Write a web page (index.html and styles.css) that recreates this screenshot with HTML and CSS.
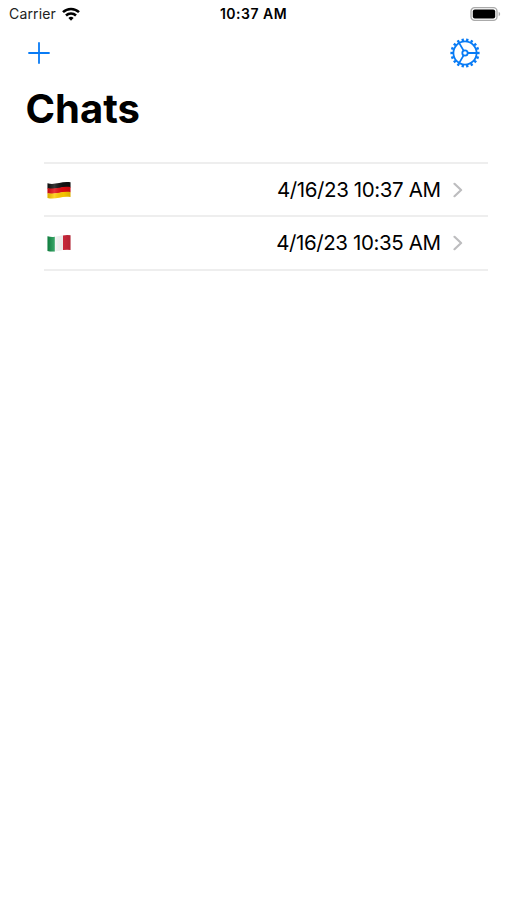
FILE: index.html
```html
<!DOCTYPE html>
<html lang="en">
<head>
<meta charset="utf-8">
<title>Chats</title>
<link rel="stylesheet" href="styles.css">
</head>
<body>
<header class="status">
  <div class="carrier"><span>Carrier</span>
    <svg width="18" height="14" viewBox="0 0 18 14" fill="none" stroke="#000" stroke-width="2.5"><path d="M1 5.2a11.3 11.3 0 0 1 16 0"/><path d="M4 8.5a7.1 7.1 0 0 1 10 0"/><path d="M9 13.8 6.4 11a3.8 3.8 0 0 1 5.2 0Z" fill="#000" stroke="none"/></svg>
  </div>
  <time class="clock">10:37 AM</time>
  <svg class="battery" width="32" height="14" viewBox="0 0 32 14"><rect x="1" y=".7" width="26" height="12.6" rx="3.6" fill="#fff" stroke="#aaa" stroke-width="1.3"/><rect x="2.8" y="2.5" width="22.4" height="9" rx="2" fill="#000"/><path d="M28.7 4.8c2 .8 2 3.6 0 4.4Z" fill="#aaa"/></svg>
</header>
<nav class="toolbar">
  <button class="tool" aria-label="New chat"><svg width="22" height="22" viewBox="0 0 22 22" stroke="#087bf5" stroke-width="1.8" stroke-linecap="round"><path d="M11 1v20M1 11h20"/></svg></button>
  <button class="tool" aria-label="Settings"><svg width="30" height="30" viewBox="0 0 30 30" fill="none" stroke="#087bf5" stroke-width="1.8"><circle cx="15" cy="15" r="11.6"/><circle cx="15" cy="15" r="13.3" stroke-width="2.6" pathLength="36" stroke-dasharray="1 1" stroke-dashoffset=".5"/><circle cx="15" cy="15" r="2.7"/><path d="M17.8 15h9M13.6 12.6 9.1 4.9M13.6 17.4l-4.5 7.7"/></svg></button>
</nav>
<h1 class="title">Chats</h1>
<main class="list">
  <a class="row">
    <svg class="flag" width="24" height="18" viewBox="0 0 24 18" role="img" aria-label="German"><defs><linearGradient id="shade"><stop offset="0" stop-color="#000" stop-opacity=".15"/><stop offset=".3" stop-color="#fff" stop-opacity=".16"/><stop offset=".7" stop-color="#000" stop-opacity=".04"/><stop offset="1" stop-color="#000" stop-opacity=".15"/></linearGradient></defs><path d="M.5 2.3c8 2.2 14-2.5 23-1v5.3c-9-1.5-15 3.2-23 1Z" fill="#111"/><path d="M.5 7c8 2.2 14-2.5 23-1v5.3c-9-1.5-15 3.2-23 1Z" fill="#e30b12"/><path d="M.5 12c8 2.2 14-2.5 23-1v5c-9-1.5-15 3.2-23 1Z" fill="#fc0"/><path d="M.5 2.3c8 2.2 14-2.5 23-1V16c-9-1.5-15 3.2-23 1Z" fill="url(#shade)"/></svg>
    <span class="date">4/16/23 10:37 AM</span>
    <svg class="chevron" width="10" height="16" viewBox="0 0 10 16"><path d="m1.5 1.8 6.6 6.2-6.6 6.2"/></svg>
  </a>
  <a class="row">
    <svg class="flag" width="24" height="18" viewBox="0 0 24 18" role="img" aria-label="Italian"><path d="M.5 2.3c8 2.2 14-2.5 23-1V16c-9-1.5-15 3.2-23 1Z" fill="#f8f8f8"/><path d="M.5 2.3q3.8.9 7.3.4v14.7q-3.5.5-7.3-.4Z" fill="#13934a"/><path d="M16 1.4q4-.7 7.5-.1V16q-3.5-.6-7.5.1Z" fill="#d0293c"/><path d="M.5 2.3c8 2.2 14-2.5 23-1V16c-9-1.5-15 3.2-23 1Z" fill="url(#shade)"/></svg>
    <span class="date">4/16/23 10:35 AM</span>
    <svg class="chevron" width="10" height="16" viewBox="0 0 10 16"><path d="m1.5 1.8 6.6 6.2-6.6 6.2"/></svg>
  </a>
</main>
</body>
</html>
```
FILE: styles.css
```css
* { box-sizing: border-box; }
body {
  margin: 0;
  min-height: 900px;
  background: #fff;
  color: #000;
  font-family: Inter, "Liberation Sans", sans-serif;
}
svg { display: block; flex: none; }
.status {
  display: grid;
  grid-template-columns: 1fr auto 1fr;
  align-items: center;
  height: 27px;
  padding: 0 5px 0 9px;
  font-size: 14px;
}
.carrier { display: flex; align-items: center; gap: 6px; color: #222; letter-spacing: .15px; }
.clock { margin-right: 4px; font-weight: 600; letter-spacing: .5px; }
.battery { justify-self: end; }
.toolbar {
  display: flex;
  justify-content: space-between;
  align-items: center;
  height: 51px;
  padding: 0 27px 0 28px;
}
.tool { padding: 0; border: 0; background: none; }
.title {
  margin: 6px 0 0 25.5px;
  font-size: 40px;
  line-height: 50px;
  font-weight: 700;
  letter-spacing: 0;
}
.list {
  margin: 28px 19px 0 44px;
  border-top: 2px solid #eee;
}
.row {
  display: flex;
  align-items: center;
  height: 53.3px;
  padding: 0 25px 0 3px;
  border-bottom: 2px solid #eee;
}
.date {
  margin-left: auto;
  margin-right: 12.5px;
  font-size: 20.5px;
  letter-spacing: -.4px;
  white-space: nowrap;
}
.chevron { fill: none; stroke: #bdbdbf; stroke-width: 2.2; stroke-linecap: round; stroke-linejoin: round; }
```
